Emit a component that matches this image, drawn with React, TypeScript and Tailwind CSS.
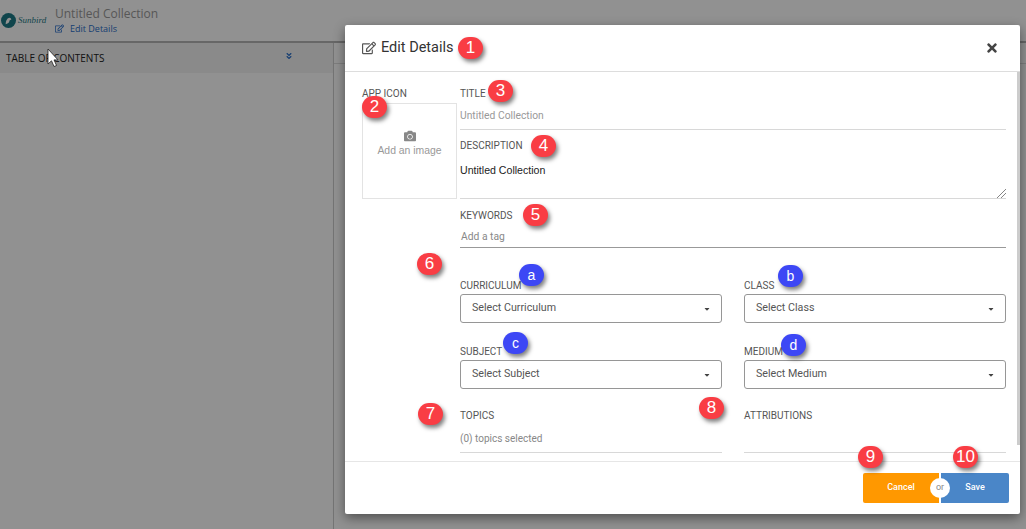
import { FaCamera, FaCaretDown, FaAngleDoubleDown, FaRegEdit, FaTimes } from 'react-icons/fa';

const labelStyles = `block font-['Roboto',sans-serif] text-[10px] leading-[12px] text-[#555] uppercase`;
const selectStyles = `flex h-[29px] items-center justify-between rounded-[3px] border border-[#969696] pr-[10px] pl-[11px] font-['Roboto',sans-serif] text-[10.7px] text-[#555]`;
const badgeBaseStyles = `absolute flex h-[22px] w-[25px] items-center justify-center rounded-full font-['Liberation_Sans',sans-serif] text-white shadow-[2px_3px_4px_rgba(0,0,0,0.5)]`;
const redBadge = `bg-[#f93d44] text-[17px]`;
const blueBadge = `bg-[#3d47f5] text-[14px]`;

function Badge({ text, className }: { text: string; className: string }) {
  return <div className={`${badgeBaseStyles} ${className}`}>{text}</div>;
}

function SelectBox({ label, placeholder }: { label: string; placeholder: string }) {
  return (
    <div>
      <span className={labelStyles}>{label}</span>
      <div className={`mt-[2px] ${selectStyles}`}>
        <span>{placeholder}</span>
        <FaCaretDown className="h-[8px] w-[8px] text-[#444]" />
      </div>
    </div>
  );
}

export default function App() {
  return (
    <div className="relative h-[529px] w-[1026px] overflow-hidden bg-white font-['Open_Sans',sans-serif]">
      <div className="flex h-[43px] items-center border-b-2 border-[#b5b5b5] bg-[#fff]">
        <div className="ml-[1px] flex w-[53px] items-center">
          <svg viewBox="0 0 16 16" className="h-[15px] w-[15px]">
            <circle cx="8" cy="8" r="8" fill="#1d7a86" />
            <path d="M5 12c0-4 2-7 4-7 1 0 2 1 2 2l-2 1c0 2-1 3-4 4z" fill="#fff" />
          </svg>
          <span className="ml-[2px] font-['Liberation_Serif',serif] text-[9px] text-[#1d7a86] italic">Sunbird</span>
        </div>
        <div className="ml-[1px] mb-[1px]">
          <div className="text-[12px] leading-[17px] text-[#999]">Untitled Collection</div>
          <div className="flex items-center gap-[6px] text-[9px] leading-[14px] text-[#2a6fc9]">
            <FaRegEdit className="h-[9px] w-[9px]" />
            <span>Edit Details</span>
          </div>
        </div>
      </div>
      <div className="flex h-[486px]">
        <div className="w-[334px] border-r border-[#ccc]">
          <div className="flex h-[30px] items-center justify-between bg-[#f2f2f2] pr-[40px] pl-[6px]">
            <span className="text-[10px] text-[#222]">TABLE OF CONTENTS</span>
            <FaAngleDoubleDown className="mb-[5px] h-[8px] w-[8px] text-[#2a6fc9]" />
          </div>
        </div>
        <div className="flex-1">
          <div className="h-[21px] border-b border-[#ddd]" />
        </div>
      </div>

      <div className="absolute inset-0 bg-black/43" />

      <div className="absolute top-[25px] left-[345px] flex h-[489px] w-[675px] flex-col rounded-[2px] bg-white shadow-[0_4px_12px_rgba(0,0,0,0.45)]">
        <div className="flex h-[47px] shrink-0 items-center justify-between border-b border-[#ddd] pr-[21px] pl-[17px]">
          <div className="flex items-center gap-[5px] font-['Roboto',sans-serif] text-[14.5px] text-[#333]">
            <FaRegEdit className="h-[14px] w-[14px] text-[#555]" />
            <span>Edit Details</span>
          </div>
          <FaTimes className="h-[14px] w-[14px] text-[#444]" />
        </div>
        <div className="flex min-h-0 flex-1">
          <div className="flex min-w-0 flex-1 pt-[16px] pl-[17px]">
            <div className="w-[98px] shrink-0">
              <span className={labelStyles}>App Icon</span>
              <div className="mt-[3px] flex h-[96px] w-[95px] flex-col items-center justify-center border border-[#e3e3e3] pb-[14px] font-['Liberation_Sans',sans-serif] text-[10.4px] text-[#999]">
                <FaCamera className="h-[12px] w-[12px] text-[#888]" />
                <span className="leading-[17px]">Add an image</span>
              </div>
            </div>
            <div className="w-[546px]">
              <span className={labelStyles}>Title</span>
              <div className="mt-[9px] h-[21px] border-b border-[#d8d8d8] font-['Roboto',sans-serif] text-[10.3px] leading-[14px] text-[#999]">Untitled Collection</div>
              <span className={`mt-[10px] ${labelStyles}`}>Description</span>
              <div className="relative mt-[11px] h-[36px] border-b border-[#d8d8d8] font-['Liberation_Sans',sans-serif] text-[10.6px] leading-[14px] text-[#222]">
                Untitled Collection
                <svg viewBox="0 0 9 9" className="absolute right-0 bottom-0 h-[9px] w-[9px] stroke-[#666]">
                  <path d="M0 9 9 0M4 9 9 4" fill="none" strokeWidth="0.8" />
                </svg>
              </div>
              <span className={`mt-[11px] ${labelStyles}`}>Keywords</span>
              <div className="mt-[8px] h-[18px] border-b border-[#999] pl-[1px] font-['Roboto',sans-serif] text-[10.3px] leading-[14px] text-[#888]">Add a tag</div>
              <div className="mt-[32px] grid grid-cols-[262px_262px] gap-x-[22px] gap-y-[23px]">
                <SelectBox label="Curriculum" placeholder="Select Curriculum" />
                <SelectBox label="Class" placeholder="Select Class" />
                <SelectBox label="Subject" placeholder="Select Subject" />
                <SelectBox label="Medium" placeholder="Select Medium" />
              </div>
              <div className="mt-[21px] grid grid-cols-[262px_262px] gap-x-[22px]">
                <div>
                  <span className={labelStyles}>Topics</span>
                  <div className="mt-[10px] h-[21px] border-b border-[#d8d8d8] font-['Roboto',sans-serif] text-[10px] leading-[14px] text-[#888]">(0) topics selected</div>
                </div>
                <div>
                  <span className={labelStyles}>Attributions</span>
                  <div className="mt-[10px] h-[21px] border-b border-[#d8d8d8]" />
                </div>
              </div>
            </div>
          </div>
          <div className="h-[373px] w-[3px] shrink-0 bg-[#ccc]" />
        </div>
        <div className="relative flex h-[53px] shrink-0 items-center justify-end border-t border-[#e6e6e6] pr-[11px] font-['Roboto',sans-serif] text-[9px] font-medium text-white">
          <div className="flex h-[30px] w-[76px] items-center justify-center rounded-l-[2px] bg-[#ff9800]">Cancel</div>
          <div className="ml-[2px] flex h-[30px] w-[68px] items-center justify-center rounded-r-[2px] bg-[#4a86c8]">Save</div>
          <div className="absolute top-[16px] right-[70px] flex h-[20px] w-[20px] items-center justify-center rounded-full bg-white text-[9px] font-normal text-[#888]">or</div>
        </div>
      </div>

      <svg viewBox="0 0 12 20" className="absolute top-[48px] left-[47px] h-[20px] w-[12px]">
        <path d="M1 1v15l3.5-3.2 2.5 5.7 2.5-1-2.5-5.6H11z" fill="#fff" stroke="#222" strokeWidth="0.8" />
      </svg>

      <Badge text="1" className={`top-[37px] left-[458px] ${redBadge}`} />
      <Badge text="2" className={`top-[96px] left-[362px] ${redBadge}`} />
      <Badge text="3" className={`top-[80px] left-[488px] ${redBadge}`} />
      <Badge text="4" className={`top-[135px] left-[531px] ${redBadge}`} />
      <Badge text="5" className={`top-[204px] left-[523px] ${redBadge}`} />
      <Badge text="6" className={`top-[253px] left-[417px] ${redBadge}`} />
      <Badge text="a" className={`top-[264px] left-[519px] ${blueBadge}`} />
      <Badge text="b" className={`top-[265px] left-[778px] ${blueBadge}`} />
      <Badge text="c" className={`top-[332px] left-[503px] ${blueBadge}`} />
      <Badge text="d" className={`top-[334px] left-[781px] ${blueBadge}`} />
      <Badge text="7" className={`top-[403px] left-[418px] ${redBadge}`} />
      <Badge text="8" className={`top-[397px] left-[699px] ${redBadge}`} />
      <Badge text="9" className={`top-[446px] left-[858px] ${redBadge}`} />
      <Badge text="10" className={`top-[446px] left-[953px] ${redBadge}`} />
    </div>
  );
}
